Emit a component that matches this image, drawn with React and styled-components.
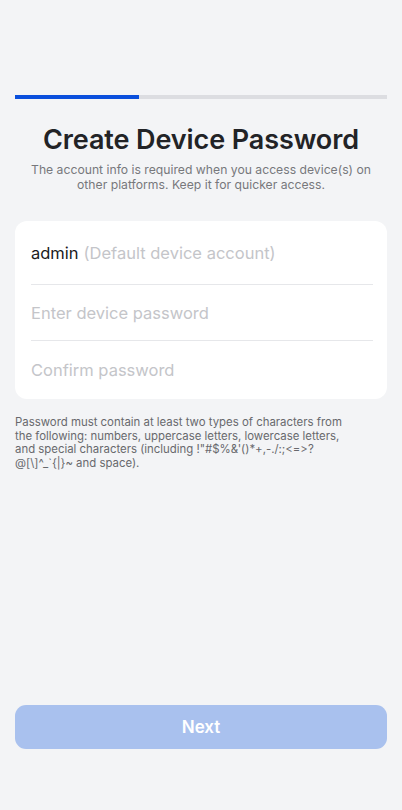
import React from "react";
import styled, { createGlobalStyle } from "styled-components";

const Global = createGlobalStyle`
  html, body { margin: 0; padding: 0; background: #f3f4f6; }
  body {
    font-family: Inter, "Noto Sans", "Liberation Sans", sans-serif;
    -webkit-font-smoothing: antialiased;
    font-variant-ligatures: none;
    font-feature-settings: "calt" 0, "liga" 0;
  }
  * { box-sizing: border-box; }
`;

const Page = styled.div`
  width: 402px;
  height: 810px;
  background: #f3f4f6;
  display: flex;
  flex-direction: column;
  padding: 95px 15px 0;
`;

const Progress = styled.div`
  height: 4px;
  background: #dcdde1;
  display: flex;
`;

const ProgressFill = styled.div`
  height: 100%;
  background: #0a4fdc;
`;

const Title = styled.h1`
  margin: 23px 0 0;
  font-size: 27px;
  line-height: 36px;
  font-weight: 600;
  color: #222326;
  text-align: center;
  letter-spacing: -0.1px;
`;

const Subtitle = styled.p`
  margin: 4px 0 0;
  font-size: 12.2px;
  line-height: 15px;
  color: #77787c;
  text-align: center;
`;

const Card = styled.div`
  margin-top: 29px;
  background: #ffffff;
  border-radius: 12px;
  padding: 0 14px 0 16px;
  display: flex;
  flex-direction: column;
`;

const Row = styled.div`
  height: ${(p) => p.h}px;
  display: flex;
  align-items: center;
  border-bottom: ${(p) => (p.last ? "none" : "1px solid #e6e7ea")};
  font-size: 16.5px;
`;

const Value = styled.span`
  color: #1a1a1c;
`;

const Placeholder = styled.span`
  color: #c4c5c9;
  margin-left: ${(p) => (p.gap ? "5px" : "0")};
`;

const Hint = styled.p`
  margin: 17px 0 0;
  font-size: 11.4px;
  line-height: 13.6px;
  color: #68696d;
  padding-right: 40px;
`;

const Spacer = styled.div`
  flex: 1;
`;

const NextButton = styled.button`
  height: 44px;
  border: none;
  border-radius: 11px;
  background: #a9c1ee;
  color: #ffffff;
  font-family: inherit;
  font-size: 17px;
  font-weight: 600;
  margin-bottom: 61px;
`;

const HINT =
  "Password must contain at least two types of characters from the following: numbers, uppercase letters, lowercase letters, and special characters (including !\"#$%&'()*+,-./:;<=>?@[\\]^_`{|}~ and space).";

export default function App() {
  return (
    <>
      <Global />
      <Page>
        <Progress>
          <ProgressFill style={{ width: "33.4%" }} />
        </Progress>
        <Title>Create Device Password</Title>
        <Subtitle>
          The account info is required when you access device(s) on
          <br />
          other platforms. Keep it for quicker access.
        </Subtitle>
        <Card>
          <Row h={64}>
            <Value>admin</Value>
            <Placeholder gap>(Default device account)</Placeholder>
          </Row>
          <Row h={56}>
            <Placeholder>Enter device password</Placeholder>
          </Row>
          <Row h={58} last>
            <Placeholder>Confirm password</Placeholder>
          </Row>
        </Card>
        <Hint>{HINT}</Hint>
        <Spacer />
        <NextButton>Next</NextButton>
      </Page>
    </>
  );
}
